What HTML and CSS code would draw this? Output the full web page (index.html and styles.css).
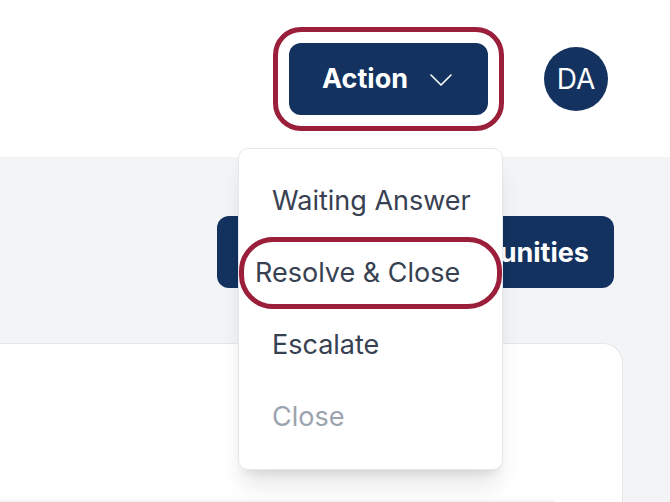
FILE: index.html
```html
<!DOCTYPE html>
<html lang="en">
<head>
  <meta charset="UTF-8">
  <title>Ticket actions</title>
  <meta name="viewport" content="width=device-width, initial-scale=1">
  <link rel="stylesheet" href="styles.css">
</head>
<body>
  <header class="topbar">
    <div class="action-wrap">
      <button class="action-btn" type="button">
        Action
        <svg class="chevron" width="22" height="12" viewBox="0 0 22 12" fill="none">
          <path d="M1 1l10 10L21 1" stroke="#fff" stroke-width="1.6" stroke-linecap="round" stroke-linejoin="round"/>
        </svg>
      </button>
      <div class="menu">
        <div class="menu-item">Waiting Answer</div>
        <div class="menu-item marked">Resolve &amp; Close</div>
        <div class="menu-item">Escalate</div>
        <div class="menu-item disabled">Close</div>
      </div>
    </div>
    <div class="avatar">DA</div>
  </header>
  <main class="content">
    <div class="toolbar">
      <button class="opp-btn" type="button">View Opportunities</button>
    </div>
    <section class="card">
      <div class="card-head"></div>
    </section>
  </main>
</body>
</html>
```

FILE: styles.css
```css
body {
  margin: 0;
  height: 502px;
  overflow: hidden;
  background: #f3f4f6;
  font-family: Inter, "Noto Sans", Arial, sans-serif;
}
.topbar {
  height: 157px;
  background: #fff;
  display: flex;
  align-items: center;
  justify-content: flex-end;
  gap: 56px;
  padding-right: 62px;
  box-sizing: border-box;
}
.action-wrap {
  position: relative;
}
.action-btn {
  height: 72px;
  width: 199px;
  display: flex;
  align-items: center;
  gap: 22px;
  padding: 0 0 0 33px;
  background: #13325f;
  color: #fff;
  font-family: inherit;
  font-size: 27px;
  font-weight: 700;
  border: none;
  border-radius: 12px;
  outline: 5px solid #9b1f3b;
  outline-offset: 11px;
  cursor: pointer;
}
.chevron {
  margin-top: 2px;
}
.avatar {
  width: 64px;
  height: 64px;
  border-radius: 50%;
  background: #13325f;
  color: #fff;
  font-size: 28px;
  display: flex;
  align-items: center;
  justify-content: center;
}
.menu {
  position: absolute;
  top: 105px;
  right: -15px;
  width: 265px;
  padding: 16px 0;
  box-sizing: border-box;
  background: #fff;
  border: 1px solid #e5e7eb;
  border-radius: 10px;
  box-shadow: 0 20px 25px -5px rgba(0,0,0,0.1), 0 8px 10px -6px rgba(0,0,0,0.1);
  z-index: 5;
}
.menu-item {
  height: 72px;
  box-sizing: border-box;
  display: flex;
  align-items: center;
  padding: 0 16px 0 33px;
  font-size: 27px;
  color: #374151;
  white-space: nowrap;
}
.menu-item.marked {
  border: 5px solid #9b1f3b;
  border-radius: 34px;
  padding-left: 11px;
}
.menu-item.disabled {
  color: #9ca3af;
}
.content {
  padding-top: 59px;
}
.toolbar {
  display: flex;
  justify-content: flex-end;
  padding-right: 56px;
}
.opp-btn {
  width: 397px;
  height: 72px;
  display: flex;
  align-items: center;
  justify-content: flex-end;
  padding: 0 25px 0 0;
  background: #13325f;
  color: #fff;
  font-family: inherit;
  font-size: 27px;
  font-weight: 700;
  border: none;
  border-radius: 12px;
}
.card {
  margin: 55px 47px 0 -20px;
  height: 159px;
  padding-top: 156px;
  box-sizing: border-box;
  background: #fff;
  border: 1px solid #e5e7eb;
  border-bottom: none;
  border-radius: 20px 20px 0 0;
}
.card-head {
  height: 2px;
  margin-right: 67px;
  background: #f3f4f6;
}
```
